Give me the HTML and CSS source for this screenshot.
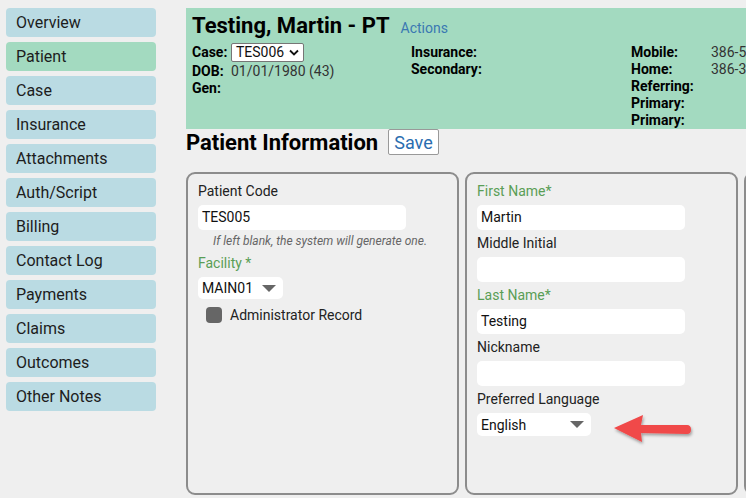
FILE: index.html
```html
<!DOCTYPE html>
<html lang="en">
<head>
  <meta charset="UTF-8">
  <meta name="viewport" content="width=device-width, initial-scale=1.0">
  <title>Patient Information</title>
  <link rel="stylesheet" href="styles.css">
</head>
<body>
  <nav class="sidebar">
    <a class="nav-item">Overview</a>
    <a class="nav-item active">Patient</a>
    <a class="nav-item">Case</a>
    <a class="nav-item">Insurance</a>
    <a class="nav-item">Attachments</a>
    <a class="nav-item">Auth/Script</a>
    <a class="nav-item">Billing</a>
    <a class="nav-item">Contact Log</a>
    <a class="nav-item">Payments</a>
    <a class="nav-item">Claims</a>
    <a class="nav-item">Outcomes</a>
    <a class="nav-item">Other Notes</a>
  </nav>

  <main class="main">
    <header class="patient-header">
      <div class="title-row">
        <h1>Testing, Martin - PT</h1>
        <a class="actions">Actions</a>
      </div>
      <div class="info-cols">
        <div class="info-col col-a">
          <div class="info-row case-row">
            <span class="lbl">Case:</span>
            <span class="case-select">TES006
              <svg width="10" height="7" viewBox="0 0 10 7"><path d="M1 1.5 L5 5.5 L9 1.5" fill="none" stroke="#111" stroke-width="1.8"/></svg>
            </span>
          </div>
          <div class="info-row"><span class="lbl">DOB:</span><span class="val">01/01/1980 (43)</span></div>
          <div class="info-row"><span class="lbl">Gen:</span></div>
        </div>
        <div class="info-col col-b">
          <div class="info-row"><span class="lbl">Insurance:</span></div>
          <div class="info-row"><span class="lbl">Secondary:</span></div>
        </div>
        <div class="info-col col-c">
          <div class="info-row"><span class="lbl">Mobile:</span><span class="val">386-555-0100</span></div>
          <div class="info-row"><span class="lbl">Home:</span><span class="val">386-355-0100</span></div>
          <div class="info-row"><span class="lbl">Referring:</span></div>
          <div class="info-row"><span class="lbl">Primary:</span></div>
          <div class="info-row"><span class="lbl">Primary:</span></div>
        </div>
      </div>
    </header>

    <div class="section-head">
      <h2>Patient Information</h2>
      <button class="save-btn">Save</button>
    </div>

    <div class="panels">
      <section class="panel">
        <label class="field-label">Patient Code</label>
        <div class="text-input">TES005</div>
        <p class="hint">If left blank, the system will generate one.</p>
        <label class="field-label required">Facility *</label>
        <div class="drop facility">MAIN01<span class="tri"></span></div>
        <div class="check-row"><span class="checkbox"></span>Administrator Record</div>
      </section>

      <section class="panel">
        <label class="field-label required">First Name*</label>
        <div class="text-input">Martin</div>
        <label class="field-label">Middle Initial</label>
        <div class="text-input"></div>
        <label class="field-label required">Last Name*</label>
        <div class="text-input">Testing</div>
        <label class="field-label">Nickname</label>
        <div class="text-input"></div>
        <label class="field-label">Preferred Language</label>
        <div class="drop language">English<span class="tri"></span></div>
      </section>

      <section class="panel"></section>
    </div>
  </main>

  <!-- callout arrow -->
  <svg class="callout" width="90" height="36" viewBox="0 0 90 36">
    <defs>
      <filter id="sh" x="-20%" y="-30%" width="140%" height="160%">
        <feDropShadow dx="1" dy="2" stdDeviation="1.5" flood-color="#000" flood-opacity="0.35"/>
      </filter>
    </defs>
    <g filter="url(#sh)" fill="#f04848">
      <path d="M3 15 L32 2 L30 12 L76 12 Q80 12 80 16.5 Q80 21 76 21 L30 20 L31 29 Z"/>
    </g>
  </svg>
</body>
</html>
```

FILE: styles.css
```css
* {
  box-sizing: border-box;
}

body {
  margin: 0;
  padding: 8px 0 0 6px;
  background-color: #efefef;
  font-family: Roboto, "Liberation Sans", Arial, sans-serif;
  color: #222;
  display: flex;
  gap: 30px;
  overflow: hidden;
  height: 498px;
  width: 746px;
}

/* Sidebar */
.sidebar {
  display: flex;
  flex-direction: column;
  gap: 5px;
  width: 150px;
  flex-shrink: 0;
}

.nav-item {
  display: block;
  height: 29px;
  line-height: 29px;
  padding-left: 10px;
  background-color: #badbe3;
  border-radius: 4px;
  font-size: 16px;
  color: #1d1d1d;
}

.nav-item.active {
  background-color: #a3dac0;
}

/* Main */
.main {
  flex: 1;
  min-width: 0;
}

.patient-header {
  background-color: #a3dac0;
  height: 121px;
  padding: 4px 6px;
  width: 600px;
}

.title-row {
  display: flex;
  align-items: baseline;
  gap: 11px;
  height: 28px;
  line-height: 28px;
}

.title-row h1 {
  margin: 0;
  font-size: 22px;
  font-weight: bold;
  color: #000;
}

.actions {
  font-size: 14px;
  color: #3a78b2;
}

.info-cols {
  display: grid;
  grid-template-columns: 219px 220px 200px;
  margin-top: 3px;
}

.info-row {
  display: flex;
  align-items: center;
  height: 17px;
  font-size: 14px;
  line-height: 17px;
}

.case-row {
  height: 19px;
  margin-bottom: 1px;
}

.col-b {
  padding-top: 1px;
}

.col-c {
  padding-top: 1px;
}

.lbl {
  font-weight: bold;
  color: #000;
}

.col-a .lbl {
  width: 39px;
}

.col-c .lbl {
  width: 80px;
}

.val {
  color: #333;
}

.case-select {
  display: flex;
  align-items: center;
  gap: 5px;
  height: 19px;
  padding: 0 4px;
  background-color: #fff;
  border: 1px solid #767676;
  border-radius: 2px;
  color: #111;
  font-size: 14px;
}

/* Section heading */
.section-head {
  display: flex;
  align-items: center;
  gap: 10px;
  height: 26px;
  margin-bottom: 17px;
}

.section-head h2 {
  margin: 0;
  font-size: 22px;
  font-weight: bold;
  color: #000;
}

.save-btn {
  height: 26px;
  padding: 0 5px;
  background-color: #fff;
  border: 1px solid #999;
  border-radius: 2px;
  font-family: inherit;
  font-size: 18px;
  color: #2a6db0;
}

/* Panels */
.panels {
  display: flex;
  gap: 6px;
}

.panel {
  width: 273px;
  height: 323px;
  flex-shrink: 0;
  border: 2px solid #8c8c8c;
  border-radius: 9px;
  padding: 7px 10px;
}

.field-label {
  display: block;
  height: 20px;
  line-height: 20px;
  font-size: 14px;
  color: #222;
  margin-bottom: 4px;
}

.field-label.required {
  color: #5a9e56;
}

.text-input {
  width: 208px;
  height: 25px;
  line-height: 25px;
  padding: 0 4px;
  background-color: #fff;
  border-radius: 5px;
  font-size: 14px;
  color: #111;
  margin-bottom: 3px;
}

.hint {
  margin: -1px 0 3px 15px;
  height: 18px;
  line-height: 18px;
  font-size: 12px;
  font-style: italic;
  color: #666;
}

.drop {
  display: flex;
  align-items: center;
  justify-content: space-between;
  height: 22px;
  padding: 0 7px 0 4px;
  background-color: #fff;
  border-radius: 5px;
  font-size: 14px;
  color: #111;
}

.drop.facility {
  width: 85px;
  margin-top: 1px;
}

.drop.language {
  width: 114px;
  height: 23px;
}

.tri {
  width: 0;
  height: 0;
  border-left: 7px solid transparent;
  border-right: 7px solid transparent;
  border-top: 7px solid #666;
}

.check-row {
  display: flex;
  align-items: center;
  gap: 8px;
  margin: 8px 0 0 8px;
  font-size: 14px;
  color: #222;
}

.checkbox {
  width: 16px;
  height: 16px;
  border-radius: 4px;
  background-color: #666;
}

/* arrow overlay */
.callout {
  position: absolute;
  left: 611px;
  top: 413px;
}
```
